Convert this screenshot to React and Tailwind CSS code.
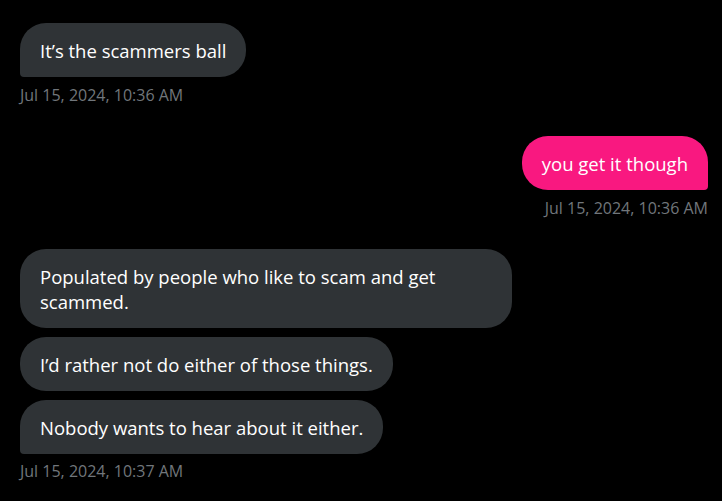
import React from "react";

const font = { fontFamily: '"Open Sans", "Liberation Sans", sans-serif' };

function Bubble({ children, mine, tail }) {
  const color = mine ? "bg-[#f91880]" : "bg-[#2f3336]";
  const corner = tail ? (mine ? "rounded-br-[4px]" : "rounded-bl-[4px]") : "";
  return (
    <div className={`${color} ${corner} rounded-[26px] px-5 pt-[15px] pb-[14px] text-white text-[18.5px] leading-[25px] max-w-[492px]`}>
      {children}
    </div>
  );
}

function Stamp({ children, right, className = "" }) {
  return (
    <div className={`text-[#71767b] text-[16px] leading-[20px] ${right ? "text-right" : ""} ${className}`}>
      {children}
    </div>
  );
}

export default function App() {
  return (
    <div className="bg-black w-[722px] h-[501px] overflow-hidden pl-5 pr-[14px] pt-[23px]" style={font}>
      <div className="flex flex-col items-start">
        <Bubble tail>It’s the scammers ball</Bubble>
        <Stamp className="mt-[8px]">Jul 15, 2024, 10:36 AM</Stamp>
      </div>

      <div className="flex flex-col items-end mt-[31px]">
        <Bubble mine tail>you get it though</Bubble>
        <Stamp right className="mt-[8px]">Jul 15, 2024, 10:36 AM</Stamp>
      </div>

      <div className="flex flex-col items-start gap-[9px] mt-[31px]">
        <Bubble>Populated by people who like to scam and get scammed.</Bubble>
        <Bubble>I’d rather not do either of those things.</Bubble>
        <Bubble tail>Nobody wants to hear about it either.</Bubble>
      </div>
      <Stamp className="mt-[7px]">Jul 15, 2024, 10:37 AM</Stamp>
    </div>
  );
}
